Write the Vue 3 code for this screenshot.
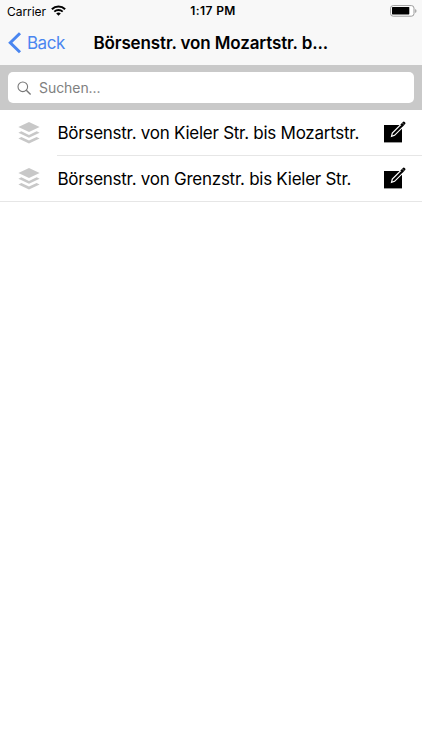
<script setup>
const rows = [
  { id: 1, label: 'Börsenstr. von Kieler Str. bis Mozartstr.' },
  { id: 2, label: 'Börsenstr. von Grenzstr. bis Kieler Str.' },
]
</script>

<template>
  <div class="screen">
    <header class="top">
      <div class="status">
        <div class="carrier">
          <span class="carrier-name">Carrier</span>
          <svg class="wifi" width="15" height="11" viewBox="0 0 15 11">
            <path d="M0.9 4.2a9.4 9.4 0 0 1 13.2 0" fill="none" stroke="#000" stroke-width="2.1" />
            <path d="M3.3 6.7a6 6 0 0 1 8.4 0" fill="none" stroke="#000" stroke-width="1.8" />
            <path d="M5.2 8.5a3.3 3.3 0 0 1 4.6 0L7.5 10.8z" fill="#000" />
          </svg>
        </div>
        <div class="clock">1:17 PM</div>
        <svg class="battery" width="27" height="12" viewBox="0 0 27 12">
          <rect x="0.6" y="0.6" width="23.4" height="10.6" rx="2.6" fill="#fff" stroke="#9b9b9b" stroke-width="1" />
          <rect x="2" y="2" width="17.3" height="7.4" rx="0.6" fill="#000" />
          <path d="M25.2 4v4a2.2 2.2 0 0 0 0-4z" fill="#9b9b9b" />
        </svg>
      </div>
      <nav class="nav">
        <a class="back">
          <svg width="14" height="22" viewBox="0 0 14 22">
            <path d="M12 1.2L2.3 10.7L12 20.2" fill="none" stroke="#4a86f0" stroke-width="3" />
          </svg>
          <span class="back-label">Back</span>
        </a>
        <h1 class="title">Börsenstr. von Mozartstr. b...</h1>
      </nav>
    </header>

    <div class="search">
      <div class="field">
        <svg class="glass" width="15" height="15" viewBox="0 0 15 15" fill="none" stroke="#777">
          <circle cx="5.8" cy="5.8" r="4.8" stroke-width="1.1" />
          <path d="M9.3 9.3L13.6 13.5" stroke-width="1.4" />
        </svg>
        <span class="placeholder">Suchen...</span>
      </div>
    </div>

    <ul class="list">
      <li v-for="row in rows" :key="row.id" class="row">
        <svg class="layers" width="22" height="22" viewBox="0 0 22 22" fill="#c8c8c8">
          <path d="M11 0L21.6 5L11 10L0.4 5z" />
          <path d="M0.4 10.7L3.4 9.3L11 12.9L18.6 9.3L21.6 10.7L11 15.7z" />
          <path d="M0.4 16.4L3.4 15L11 18.6L18.6 15L21.6 16.4L11 21.4z" />
        </svg>
        <div class="body">
          <span class="label">{{ row.label }}</span>
          <svg class="edit" width="23" height="22" viewBox="0 0 23 22">
            <rect x="1" y="4" width="18" height="17.4" fill="#000" />
            <path d="M15.6 4L18.3 1.3L21.8 4.8L19 7.6V4z" fill="#fff" />
            <path d="M8.5 15.4L9.3 12L18.3 3L20.6 5.3L11.6 14.3z" fill="#000" stroke="#fff" stroke-width="1.2" />
            <path d="M17.4 3.4L20.2 0.8Q20.9 0.2 21.6 0.9L22.2 1.5Q22.8 2.2 22.2 2.9L19.6 5.7z" fill="#000" />
            <path d="M19.5 2.1L21 3.6" stroke="#fff" stroke-width="0.5" />
          </svg>
        </div>
      </li>
    </ul>
  </div>
</template>

<style>
body {
  background: #fff;
}
</style>

<style scoped>
.screen {
  width: 422px;
  height: 750px;
  overflow: hidden;
  background: #fff;
  color: #000;
  font-family: Inter, "Liberation Sans", sans-serif;
  white-space: nowrap;
}
.top {
  height: 65px;
  background: #f8f8f8;
}
.status {
  display: grid;
  grid-template-columns: 1fr auto 1fr;
  align-items: center;
  height: 22px;
  padding: 0 5px 0 7px;
}
.carrier {
  display: flex;
  align-items: center;
  gap: 5px;
}
.carrier-name {
  font-size: 12px;
  letter-spacing: -0.05px;
}
.wifi {
  margin-top: -2px;
}
.clock {
  margin: -1px 0 0 2px;
  font-size: 12px;
  font-weight: 600;
  letter-spacing: 0.42px;
}
.battery {
  justify-self: end;
  margin-top: -1px;
}
.nav {
  display: flex;
  align-items: center;
  height: 42px;
  padding-left: 8px;
}
.back {
  display: flex;
  align-items: center;
  gap: 5px;
  width: 85.5px;
  color: #4a86f0;
}
.back-label {
  font-size: 17px;
  letter-spacing: -0.5px;
}
.title {
  margin: 0;
  font-size: 17px;
  font-weight: 600;
  letter-spacing: -0.13px;
}
.search {
  height: 45px;
  padding: 7px 8px;
  box-sizing: border-box;
  background: #c9c9c9;
}
.field {
  display: flex;
  align-items: center;
  gap: 7px;
  height: 31px;
  padding-left: 9px;
  box-sizing: border-box;
  border-radius: 5px;
  background: #fff;
}
.glass {
  margin-top: 2px;
}
.placeholder {
  color: #808080;
  font-size: 14px;
  letter-spacing: -0.06px;
}
.list {
  margin: 0;
  padding: 0;
  list-style: none;
}
.row {
  display: flex;
  align-items: flex-start;
  height: 46px;
  padding-left: 18px;
  box-sizing: border-box;
}
.row:last-child {
  border-bottom: 1px solid #e6e6e6;
}
.layers {
  margin-top: 12px;
  margin-right: 17px;
}
.body {
  display: flex;
  flex: 1;
  align-items: flex-start;
  justify-content: space-between;
  height: 46px;
  padding-right: 16px;
  box-sizing: border-box;
}
.row:not(:last-child) .body {
  border-bottom: 1px solid #e6e6e6;
}
.edit {
  margin-top: 11px;
}
.label {
  padding-left: 0.5px;
  font-size: 17px;
  line-height: 46px;
  letter-spacing: -0.26px;
}
</style>
